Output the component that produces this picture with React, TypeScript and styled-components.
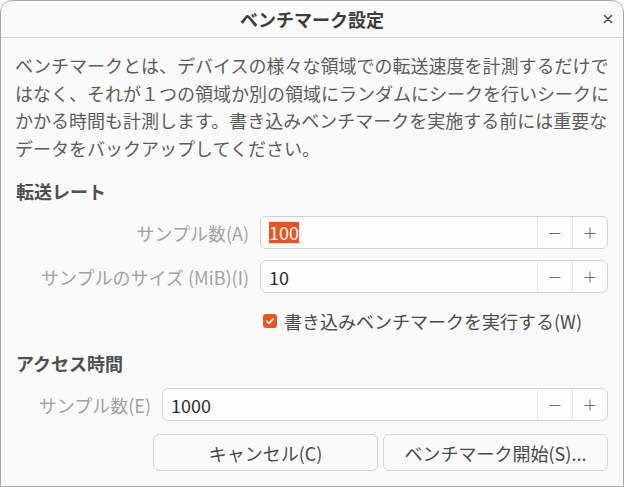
import React from "react";
import styled, { createGlobalStyle } from "styled-components";

const Global = createGlobalStyle`
  html, body { margin: 0; padding: 0; background: #ffffff; }
  body { font-family: "Noto Sans CJK JP", "Noto Sans", sans-serif; }
  * { box-sizing: border-box; }
`;

const Window = styled.div`
  width: 624px;
  height: 487px;
  background: #fafafa;
  border: 1px solid #a9a9a9;
  border-radius: 12px 12px 0 0;
  display: flex;
  flex-direction: column;
  overflow: hidden;
  font-size: 18px;
`;

const Header = styled.header`
  height: 37px;
  flex: none;
  border-bottom: 1px solid #d6d6d6;
  display: grid;
  grid-template-columns: 1fr auto 1fr;
  align-items: center;
`;

const Title = styled.h1`
  grid-column: 2;
  margin: 0;
  font-size: 18px;
  font-weight: 700;
  color: #3d3d3d;
  line-height: 24px;
`;

const CloseButton = styled.button`
  justify-self: end;
  margin-right: 7px;
  width: 16px;
  height: 16px;
  padding: 0;
  border: none;
  background: transparent;
  display: flex;
  align-items: center;
  justify-content: center;
  color: #505050;
`;

const Content = styled.main`
  flex: 1;
  display: flex;
  flex-direction: column;
  padding: 14px 15px 15px 14px;
`;

const Description = styled.p`
  margin: 0;
  font-size: 18px;
  line-height: 27.5px;
  color: #5c5c5c;
  white-space: nowrap;
`;

const Line = styled.span`
  display: block;
`;

const SectionTitle = styled.h2<{ $top: number }>`
  margin: ${(p) => p.$top}px 0 0 1px;
  font-size: 18px;
  font-weight: 700;
  line-height: 24px;
  color: #4f4f4f;
`;

const FormGrid = styled.div<{ $labelCol: number }>`
  margin: 13px 0 0 25px;
  display: grid;
  grid-template-columns: ${(p) => p.$labelCol}px 1fr;
  column-gap: 11px;
  row-gap: 11px;
  align-items: center;
`;

const Label = styled.label`
  justify-self: end;
  color: #a2a2a2;
  font-size: 18px;
  line-height: 24px;
  white-space: nowrap;
`;

const Spin = styled.div`
  height: 33px;
  border: 1px solid #d3d3d3;
  border-radius: 6px;
  background: #fdfdfd;
  display: flex;
  align-items: stretch;
  overflow: hidden;
`;

const SpinValue = styled.div`
  flex: 1;
  display: flex;
  align-items: center;
  padding-left: 8px;
  color: #2e2e2e;
  font-size: 18px;
`;

const Selected = styled.span`
  background: #e95420;
  color: #ffffff;
  line-height: 21px;
`;

const SpinButton = styled.button`
  width: 35px;
  flex: none;
  border: none;
  border-left: 1px solid #e7e7e7;
  background: transparent;
  padding: 0;
  display: flex;
  align-items: center;
  justify-content: center;
  color: #6a6a6a;
`;

const CheckRow = styled.div`
  grid-column: 2;
  height: 33px;
  display: flex;
  align-items: center;
  gap: 7px;
  padding-left: 3px;
  color: #4a4a4a;
  font-size: 18px;
`;

const CheckBox = styled.span`
  width: 14px;
  height: 14px;
  border-radius: 3px;
  background: #e95420;
  display: flex;
  align-items: center;
  justify-content: center;
`;

const Actions = styled.div`
  margin-top: 13px;
  display: flex;
  justify-content: flex-end;
  gap: 5px;
`;

const ActionButton = styled.button`
  width: 225px;
  height: 37px;
  border: 1px solid #d5d5d5;
  border-radius: 6px;
  background: #fafafa;
  font-family: inherit;
  font-size: 18px;
  color: #4a4a4a;
  padding: 0;
`;

const MinusIcon = () => (
  <svg width="14" height="14" viewBox="0 0 14 14">
    <line x1="1.5" y1="7.5" x2="12.5" y2="7.5" stroke="currentColor" strokeWidth="1" />
  </svg>
);

const PlusIcon = () => (
  <svg width="14" height="14" viewBox="0 0 14 14">
    <line x1="1.5" y1="7.5" x2="12.5" y2="7.5" stroke="currentColor" strokeWidth="1" />
    <line x1="7" y1="1.5" x2="7" y2="12.5" stroke="currentColor" strokeWidth="1" />
  </svg>
);

const SpinField = ({ children }: { children: React.ReactNode }) => (
  <Spin>
    <SpinValue>{children}</SpinValue>
    <SpinButton aria-label="減らす">
      <MinusIcon />
    </SpinButton>
    <SpinButton aria-label="増やす">
      <PlusIcon />
    </SpinButton>
  </Spin>
);

export default function App() {
  return (
    <>
      <Global />
      <Window>
        <Header>
          <Title>ベンチマーク設定</Title>
          <CloseButton aria-label="閉じる">
            <svg width="10" height="10" viewBox="0 0 10 10">
              <path d="M1.5 1.5 L8.5 8.5 M8.5 1.5 L1.5 8.5" stroke="currentColor" strokeWidth="1.6" strokeLinecap="round" />
            </svg>
          </CloseButton>
        </Header>
        <Content>
          <Description>
            <Line>ベンチマークとは、デバイスの様々な領域での転送速度を計測するだけで</Line>
            <Line>はなく、それが１つの領域か別の領域にランダムにシークを行いシークに</Line>
            <Line>かかる時間も計測します。書き込みベンチマークを実施する前には重要な</Line>
            <Line>データをバックアップしてください。</Line>
          </Description>

          <SectionTitle $top={17}>転送レート</SectionTitle>
          <FormGrid $labelCol={209}>
            <Label>サンプル数(A)</Label>
            <SpinField>
              <Selected>100</Selected>
            </SpinField>
            <Label>サンプルのサイズ (MiB)(I)</Label>
            <SpinField>10</SpinField>
            <CheckRow>
              <CheckBox>
                <svg width="10" height="10" viewBox="0 0 10 10">
                  <path d="M1.8 5.2 L4 7.3 L8.3 2.8" fill="none" stroke="#ffffff" strokeWidth="1.7" strokeLinecap="round" strokeLinejoin="round" />
                </svg>
              </CheckBox>
              書き込みベンチマークを実行する(W)
            </CheckRow>
          </FormGrid>

          <SectionTitle $top={14}>アクセス時間</SectionTitle>
          <FormGrid $labelCol={111}>
            <Label>サンプル数(E)</Label>
            <SpinField>1000</SpinField>
          </FormGrid>

          <Actions>
            <ActionButton>キャンセル(C)</ActionButton>
            <ActionButton>ベンチマーク開始(S)...</ActionButton>
          </Actions>
        </Content>
      </Window>
    </>
  );
}
